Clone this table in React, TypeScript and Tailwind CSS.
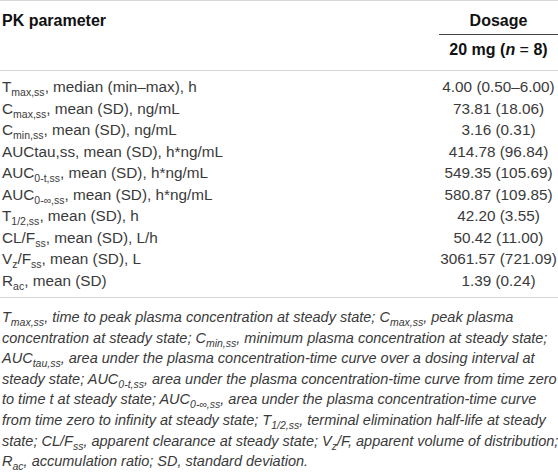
import React from "react";

const Sub = ({ children }: { children: React.ReactNode }) => (
  <span className="relative top-[4px] text-[10.5px] leading-none">{children}</span>
);

const rows: { label: React.ReactNode; value: string }[] = [
  { label: <>T<Sub>max,ss</Sub>, median (min–max), h</>, value: "4.00 (0.50–6.00)" },
  { label: <>C<Sub>max,ss</Sub>, mean (SD), ng/mL</>, value: "73.81 (18.06)" },
  { label: <>C<Sub>min,ss</Sub>, mean (SD), ng/mL</>, value: "3.16 (0.31)" },
  { label: <>AUCtau,ss, mean (SD), h*ng/mL</>, value: "414.78 (96.84)" },
  { label: <>AUC<Sub>0-t,ss</Sub>, mean (SD), h*ng/mL</>, value: "549.35 (105.69)" },
  { label: <>AUC<Sub>0-∞,ss</Sub>, mean (SD), h*ng/mL</>, value: "580.87 (109.85)" },
  { label: <>T<Sub>1/2,ss</Sub>, mean (SD), h</>, value: "42.20 (3.55)" },
  { label: <>CL/F<Sub>ss</Sub>, mean (SD), L/h</>, value: "50.42 (11.00)" },
  { label: <>V<Sub>z</Sub>/F<Sub>ss</Sub>, mean (SD), L</>, value: "3061.57 (721.09)" },
  { label: <>R<Sub>ac</Sub>, mean (SD)</>, value: "1.39 (0.24)" },
];

export default function App() {
  return (
    <div
      className="w-[558px] h-[472px] bg-white text-[#3a3a3a] overflow-hidden"
      style={{ fontFamily: '"Liberation Sans", Arial, sans-serif' }}
    >
      <div className="border-t border-[#d6d6d6]">
        <div className="flex border-b border-[#d6d6d6]">
          <div className="flex-1 pl-[2px] pt-[9px] text-[16px] leading-[22px] font-bold text-[#111]">PK parameter</div>
          <div className="w-[119px] text-[16px] leading-[22px] font-bold text-[#111]">
            <div className="pt-[9px] pb-[2px] text-center border-b border-[#444]">Dosage</div>
            <div className="pt-[4px] pb-[9px] text-center">
              20 mg (<span className="italic">n</span> <span className="font-normal">=</span> 8)
            </div>
          </div>
        </div>
        <div className="flex flex-col pt-[5px] pb-[6px] border-b border-[#d6d6d6] text-[15.3px] leading-[21.5px]">
          {rows.map((r, i) => (
            <div key={i} className="flex">
              <div className="flex-1 pl-[2px] whitespace-nowrap">{r.label}</div>
              <div className="w-[119px] text-center whitespace-nowrap">{r.value}</div>
            </div>
          ))}
        </div>
        <div className="pt-[9px] pl-[2px] text-[14.5px] leading-[20.6px] italic">
          <div className="whitespace-nowrap">T<Sub>max,ss</Sub>, time to peak plasma concentration at steady state; C<Sub>max,ss</Sub>, peak plasma</div>
          <div className="whitespace-nowrap">concentration at steady state; C<Sub>min,ss</Sub>, minimum plasma concentration at steady state;</div>
          <div className="whitespace-nowrap">AUC<Sub>tau,ss</Sub>, area under the plasma concentration-time curve over a dosing interval at</div>
          <div className="whitespace-nowrap">steady state; AUC<Sub>0-t,ss</Sub>, area under the plasma concentration-time curve from time zero</div>
          <div className="whitespace-nowrap">to time t at steady state; AUC<Sub>0-∞,ss</Sub>, area under the plasma concentration-time curve</div>
          <div className="whitespace-nowrap">from time zero to infinity at steady state; T<Sub>1/2,ss</Sub>, terminal elimination half-life at steady</div>
          <div className="whitespace-nowrap">state; CL/F<Sub>ss</Sub>, apparent clearance at steady state; V<Sub>z</Sub>/F, apparent volume of distribution;</div>
          <div className="whitespace-nowrap">R<Sub>ac</Sub>, accumulation ratio; SD, standard deviation.</div>
        </div>
      </div>
    </div>
  );
}
